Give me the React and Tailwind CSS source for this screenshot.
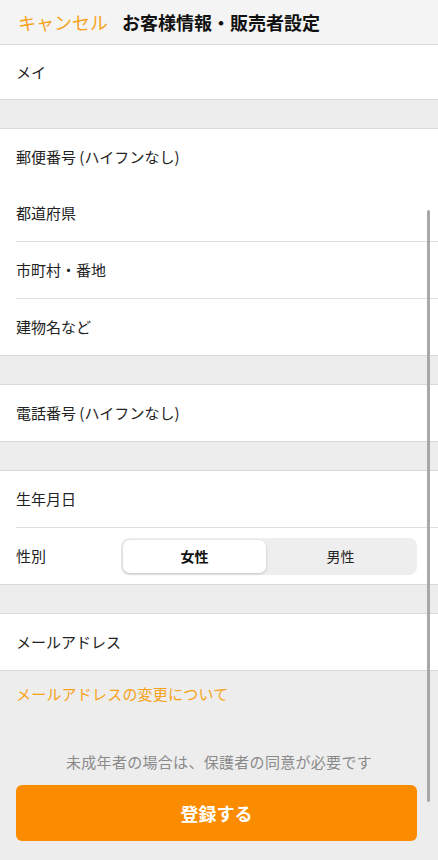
import React from "react";

const font = { fontFamily: '"Noto Sans CJK JP", "Noto Sans", sans-serif' };

function Row({ children, divider }) {
  return (
    <div>
      {divider && <div className="ml-4 h-px bg-[#e0e0e0]" />}
      <div className="flex h-[56px] items-center px-4 text-[15px] text-[#222]">{children}</div>
    </div>
  );
}

function Section({ children }) {
  return <div className="border-y border-[#d9d9d9] bg-white">{children}</div>;
}

export default function App() {
  return (
    <div className="relative min-h-[860px] w-full overflow-hidden bg-[#ededed]" style={font}>
      {/* header */}
      <div className="flex h-[45px] items-center gap-[14px] border-b border-[#d6d6d6] bg-[#f4f4f4] pl-[18px]">
        <span className="text-[18px] text-[#f7a21b]">キャンセル</span>
        <span className="text-[18px] font-bold text-[#111]">お客様情報・販売者設定</span>
      </div>

      <div className="border-b border-[#d9d9d9] bg-white">
        <div className="flex h-[54px] items-center px-4 text-[15px] text-[#222]">メイ</div>
      </div>

      <div className="h-[28px]" />
      <Section>
        <Row>郵便番号 (ハイフンなし)</Row>
        <Row>都道府県</Row>
        <Row divider>市町村・番地</Row>
        <Row divider>建物名など</Row>
      </Section>

      <div className="h-[28px]" />
      <Section>
        <Row>電話番号 (ハイフンなし)</Row>
      </Section>

      <div className="h-[28px]" />
      <Section>
        <Row>生年月日</Row>
        <div className="ml-4 h-px bg-[#e0e0e0]" />
        <div className="flex h-[56px] items-center pl-4 pr-[21px] text-[15px] text-[#222]">
          <span className="w-[105px]">性別</span>
          <div className="flex h-[37px] flex-1 items-center rounded-[8px] bg-[#eeeeee] p-[2px]">
            <div className="flex h-full w-[143px] items-center justify-center rounded-[7px] bg-white text-[14px] font-bold text-[#111] shadow-[0_1px_3px_rgba(0,0,0,0.18)]">
              女性
            </div>
            <div className="flex h-full flex-1 items-center justify-center text-[14px] text-[#222]">男性</div>
          </div>
        </div>
      </Section>

      <div className="h-[28px]" />
      <Section>
        <Row>メールアドレス</Row>
      </Section>

      <div className="px-4 pt-[12px] text-[15px] leading-[22px] tracking-[0.2px] text-[#f7a21b]">メールアドレスの変更について</div>

      <div className="mt-[47px] text-center text-[15px] leading-[20px] tracking-[0.3px] text-[#8a8a8a]">
        未成年者の場合は、保護者の同意が必要です
      </div>

      <div className="mx-4 mt-[13px] flex h-[56px] w-[401px] items-center justify-center rounded-[6px] bg-[#fb8c00] text-[18px] font-bold text-white">
        登録する
      </div>

      {/* scrollbar overlay */}
      <div className="absolute left-[427px] top-[210px] h-[592px] w-[3px] rounded-full bg-[#a8a8a8]" />
    </div>
  );
}
